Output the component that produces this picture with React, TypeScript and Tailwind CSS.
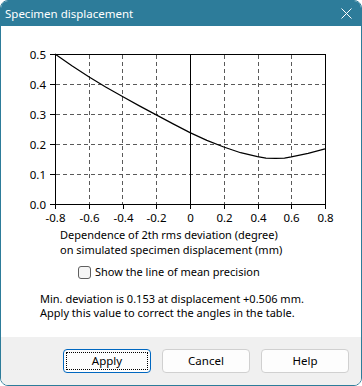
import React from "react";

const font = { fontFamily: '"Noto Sans", "Open Sans", sans-serif' };

// page coords -> plot
const px = (v: number) => 55 + ((v + 0.8) / 1.6) * 270;
const py = (v: number) => 204 - v * 300;

const curve: [number, number][] = [
  [-0.8, 0.5],
  [-0.7, 0.461],
  [-0.6, 0.424],
  [-0.5, 0.39],
  [-0.4, 0.358],
  [-0.3, 0.327],
  [-0.2, 0.297],
  [-0.1, 0.267],
  [0, 0.238],
  [0.1, 0.212],
  [0.2, 0.19],
  [0.3, 0.171],
  [0.4, 0.158],
  [0.45, 0.153],
  [0.506, 0.152],
  [0.56, 0.153],
  [0.6, 0.157],
  [0.7, 0.169],
  [0.8, 0.184],
];

const xTicks = [-0.8, -0.6, -0.4, -0.2, 0, 0.2, 0.4, 0.6, 0.8];
const yTicks = [0, 0.1, 0.2, 0.3, 0.4, 0.5];

const Chart = () => {
  const gx = [89, 122, 156, 224, 258, 291];
  const gy = [84, 114, 144, 174];
  return (
    <svg width={360} height={201} viewBox="1 26 360 201" className="block" style={font}>
      <g stroke="#5a5a5a" strokeWidth={1} strokeDasharray="4 3" shapeRendering="crispEdges">
        {gx.map((x) => (
          <line key={"gx" + x} x1={x + 0.5} y1={55} x2={x + 0.5} y2={204} />
        ))}
        {gy.map((y) => (
          <line key={"gy" + y} x1={56} y1={y + 0.5} x2={325} y2={y + 0.5} />
        ))}
      </g>
      <g stroke="#000" strokeWidth={1} shapeRendering="crispEdges" fill="none">
        <rect x={55.5} y={54.5} width={270} height={150} />
        <line x1={190.5} y1={54} x2={190.5} y2={205} />
        {yTicks.map((v) => (
          <line key={"ty" + v} x1={50} y1={Math.round(py(v)) + 0.5} x2={55} y2={Math.round(py(v)) + 0.5} />
        ))}
        {xTicks.map((v) => (
          <line key={"tx" + v} x1={Math.round(px(v)) + 0.5} y1={205} x2={Math.round(px(v)) + 0.5} y2={209} />
        ))}
      </g>
      <polyline
        fill="none"
        stroke="#000"
        strokeWidth={1.2}
        points={curve.map(([x, y]) => `${px(x)},${py(y)}`).join(" ")}
      />
      <g fontSize={11.5} fill="#000">
        {yTicks.map((v) => (
          <text key={"ly" + v} x={46} y={Math.round(py(v)) + 4.5} textAnchor="end">
            {v.toFixed(1)}
          </text>
        ))}
        {xTicks.map((v) => (
          <text key={"lx" + v} x={Math.round(px(v)) + 0.5} y={222} textAnchor="middle">
            {v === 0 ? "0" : v.toFixed(1)}
          </text>
        ))}
      </g>
    </svg>
  );
};

const Btn = ({ label, focused }: { label: string; focused?: boolean }) => (
  <button
    className={
      focused
        ? "relative w-[88px] h-[24px] rounded-[4px] border border-[#0067c0] bg-[#fdfdfd] text-[11.5px] text-black"
        : "relative w-[88px] h-[24px] rounded-[4px] border border-[#d0d0d0] bg-[#fdfdfd] text-[11.5px] text-black"
    }
    style={font}
  >
    {focused && (
      <span className="absolute inset-[2px] border border-dotted border-black" />
    )}
    <span className="relative">{label}</span>
  </button>
);

export default function App() {
  return (
    <div className="w-[362px] h-[386px] bg-white" style={font}>
      <div className="w-[362px] h-[386px] flex flex-col rounded-[8px] border border-[#2d7c9a] overflow-hidden">
        <div className="h-[25px] bg-[#2d7c9a] flex items-center justify-between pl-[4px] pr-[9px] shrink-0">
          <span className="text-[11.5px] text-white leading-none">Specimen displacement</span>
          <svg width={11} height={11} viewBox="0 0 11 11">
            <path d="M0.5 0.5 L10.5 10.5 M10.5 0.5 L0.5 10.5" stroke="#fff" strokeWidth={1} />
          </svg>
        </div>
        <div className="flex-1 bg-white">
          <Chart />
          <div className="ml-[59px] text-[11px] leading-[15px] text-black">
            <div>Dependence of 2th rms deviation (degree)</div>
            <div>on simulated specimen displacement (mm)</div>
          </div>
          <div className="flex items-start ml-[77px] mt-[7px] text-[11px] leading-[16px] text-black">
            <span className="w-[13px] h-[13px] mt-[2px] rounded-[3px] border border-[#5f5f5f] bg-[#f5f5f5]" />
            <span className="ml-[4px]">Show the line of mean precision</span>
          </div>
          <div className="ml-[39px] mt-[12px] text-[11px] leading-[14px] text-black">
            <div>Min. deviation is 0.153 at displacement +0.506 mm.</div>
            <div>Apply this value to correct the angles in the table.</div>
          </div>
        </div>
        <div className="h-[48px] shrink-0 bg-[#f0f0f0] flex items-start justify-end pt-[12px] pr-[12px] gap-[11px]">
          <Btn label="Apply" focused />
          <Btn label="Cancel" />
          <Btn label="Help" />
        </div>
      </div>
    </div>
  );
}
